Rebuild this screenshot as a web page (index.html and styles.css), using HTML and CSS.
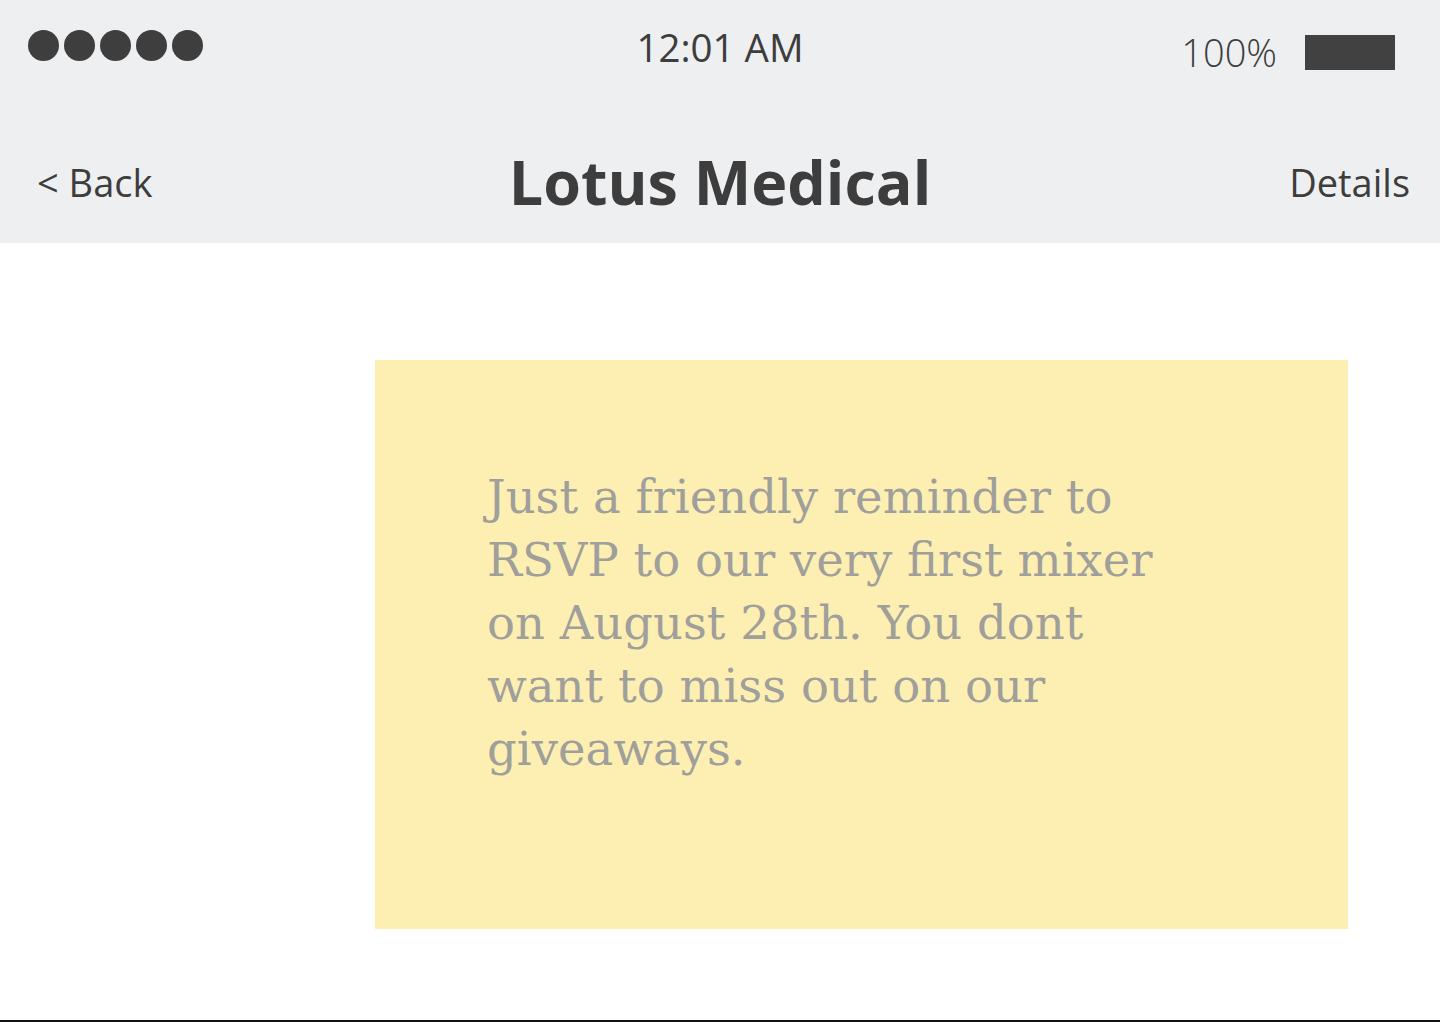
FILE: index.html
```html
<!DOCTYPE html>
<html>
<head>
<meta charset="utf-8">
<link rel="stylesheet" href="styles.css">
</head>
<body>
<div class="page">
  <header class="top">
    <div class="status">
      <div class="dots"><span></span><span></span><span></span><span></span><span></span></div>
      <div class="time">12:01 AM</div>
      <div class="battery"><span class="pct">100%</span><span class="cell"></span></div>
    </div>
    <div class="nav">
      <div class="back">&lt; Back</div>
      <div class="title">Lotus Medical</div>
      <div class="details">Details</div>
    </div>
  </header>
  <main class="thread">
    <div class="bubble">
      <p class="msg">Just a friendly reminder to RSVP to our very first mixer on August 28th. You dont want to miss out on our giveaways.</p>
    </div>
  </main>
</div>
</body>
</html>
```
FILE: styles.css
```css
html, body { margin: 0; padding: 0; background: #fff; }
.page {
  width: 1440px; height: 1022px; box-sizing: border-box;
  display: flex; flex-direction: column;
  border-bottom: 2px solid #111;
}
.top { background: #eeeff1; height: 243px; color: #3d3d3d; font-family: "Open Sans", sans-serif; }
.status {
  height: 96px; display: grid; grid-template-columns: 1fr auto 1fr; align-items: center;
  padding: 0 28px;
}
.dots { display: flex; gap: 5px; align-self: start; padding-top: 30px; }
.dots span { width: 31px; height: 31px; border-radius: 50%; background: #3e3e3e; }
.time { font-size: 38.5px; padding-bottom: 2px; }
.battery { justify-self: end; display: flex; align-items: center; gap: 28px; padding-top: 8px; margin-right: 17px; }
.pct { font-size: 38px; font-weight: 300; }
.cell { width: 90px; height: 35px; background: #414141; display: block; margin-top: 0; }
.nav {
  height: 147px; display: grid; grid-template-columns: 1fr auto 1fr; align-items: center;
  padding: 0 30px;
}
.back { font-size: 38px; padding-top: 24px; padding-left: 7px; }
.title { font-size: 61px; font-weight: 700; padding-top: 24px; }
.details { font-size: 38px; justify-self: end; padding-top: 24px; }
.thread { flex: 1; padding: 117px 0 0 375px; }
.bubble {
  width: 973px; height: 569px; background: #fdefb2; box-sizing: border-box;
  padding: 106px 160px 0 112px;
}
.msg {
  margin: 0; font-family: "DejaVu Serif", serif; font-size: 46.5px; line-height: 63px;
  color: #a09f9b;
}
```
